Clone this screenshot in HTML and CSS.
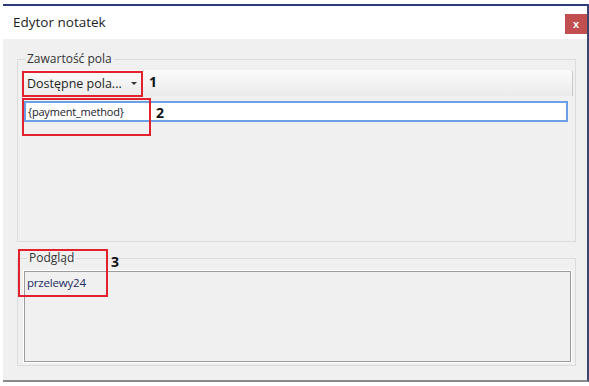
FILE: index.html
```html
<!DOCTYPE html>
<html lang="pl">
<head>
    <meta charset="UTF-8">
    <title>Edytor notatek</title>
    <link rel="stylesheet" href="styles.css">
</head>
<body>

<div class="window">
    <div class="titlebar">
        <span class="title">Edytor notatek</span>
        <button class="close-btn">x</button>
    </div>

    <div class="content">
        <fieldset class="group group-fields">
            <legend>Zawartość pola</legend>
            <div class="toolbar">
                <span class="dropdown">Dostępne pola... <span class="caret"></span></span>
            </div>
            <input class="field" type="text" value="{payment_method}">
        </fieldset>

        <fieldset class="group group-preview">
            <legend>Podgląd</legend>
            <div class="preview">przelewy24</div>
        </fieldset>
    </div>
</div>

<!-- annotations drawn over the screenshot -->
<div class="mark mark-1"></div>
<div class="mark mark-2"></div>
<div class="mark mark-3"></div>
<span class="num num-1">1</span>
<span class="num num-2">2</span>
<span class="num num-3">3</span>

</body>
</html>
```

FILE: styles.css
```css
body {
    margin: 0;
    background-color: #ffffff;
    font-family: "Open Sans", "Noto Sans", sans-serif;
    position: relative;
    width: 589px;
    height: 386px;
    overflow: hidden;
}

.window {
    margin: 4px 0 0 3px;
    width: 586px;
    box-sizing: border-box;
    border-top: 2px solid #2d3c78;
    border-right: 2px solid #3a4570;
    border-bottom: 2px solid #8a8a8a;
    background-color: #f0f0f0;
}

.titlebar {
    height: 33px;
    background-color: #ffffff;
    display: flex;
    justify-content: space-between;
    align-items: flex-start;
    margin-left: -3px;
    padding-left: 13px;
}

.title {
    font-size: 13.5px;
    color: #1e1e1e;
    margin-top: 7px;
}

.close-btn {
    width: 22px;
    height: 20px;
    margin-top: 8px;
    border: none;
    padding: 0;
    background-color: #c24f4f;
    color: #ffffff;
    font-family: "Liberation Sans", Arial, sans-serif;
    font-weight: bold;
    font-size: 11px;
    line-height: 18px;
}

.content {
    padding: 12px 11px 11px 14px;
    height: 341px;
    box-sizing: border-box;
}

.group {
    margin: 0;
    border: 1px solid #dcdcdc;
    padding: 3px 2px 0 4px;
}

.group legend {
    font-size: 12px;
    line-height: 16px;
    color: #333333;
    padding: 0 2px;
    margin-left: 3px;
}

.group-fields {
    height: 191px;
    box-sizing: border-box;
}

.toolbar {
    height: 26px;
    border-radius: 3px 3px 0 0;
    border-right: 1px solid #c9c9c9;
    background: linear-gradient(#fbfbfb, #ebebeb);
    display: flex;
    align-items: center;
    padding-left: 5px;
}

.dropdown {
    font-size: 12.5px;
    color: #1e1e1e;
    display: flex;
    align-items: center;
}

.caret {
    margin-left: 9px;
    width: 0;
    height: 0;
    border-left: 3px solid transparent;
    border-right: 3px solid transparent;
    border-top: 3px solid #333333;
}

.field {
    display: block;
    margin: 5px 0 0 2px;
    width: 544px;
    height: 21px;
    box-sizing: border-box;
    border: 2px solid #6d9fe6;
    padding: 0 2px;
    font-family: "Open Sans", "Noto Sans", sans-serif;
    font-size: 11px;
    letter-spacing: -0.2px;
    color: #1a1a2a;
    outline: none;
}

.group-preview {
    margin-top: 8px;
    padding: 5px 4px 3px 6px;
}

.preview {
    height: 91px;
    box-sizing: border-box;
    border: 1px solid #9c9c9c;
    box-shadow: 0 0 0 1px #ffffff;
    padding: 3px 2px;
    font-size: 11.5px;
    letter-spacing: -0.2px;
    color: #1e2c64;
}

.mark {
    position: absolute;
    border: 2px solid #e3202e;
    box-sizing: border-box;
}

.mark-1 { left: 22px; top: 71px; width: 121px; height: 26px; }
.mark-2 { left: 22px; top: 98px; width: 129px; height: 38px; }
.mark-3 { left: 18px; top: 249px; width: 90px; height: 48px; }

.num {
    position: absolute;
    font-family: "Open Sans", sans-serif;
    font-weight: bold;
    font-size: 14px;
    line-height: 16px;
    color: #111111;
}

.num-1 { left: 149px; top: 74px; }
.num-2 { left: 156px; top: 105px; }
.num-3 { left: 111px; top: 254px; }
```
